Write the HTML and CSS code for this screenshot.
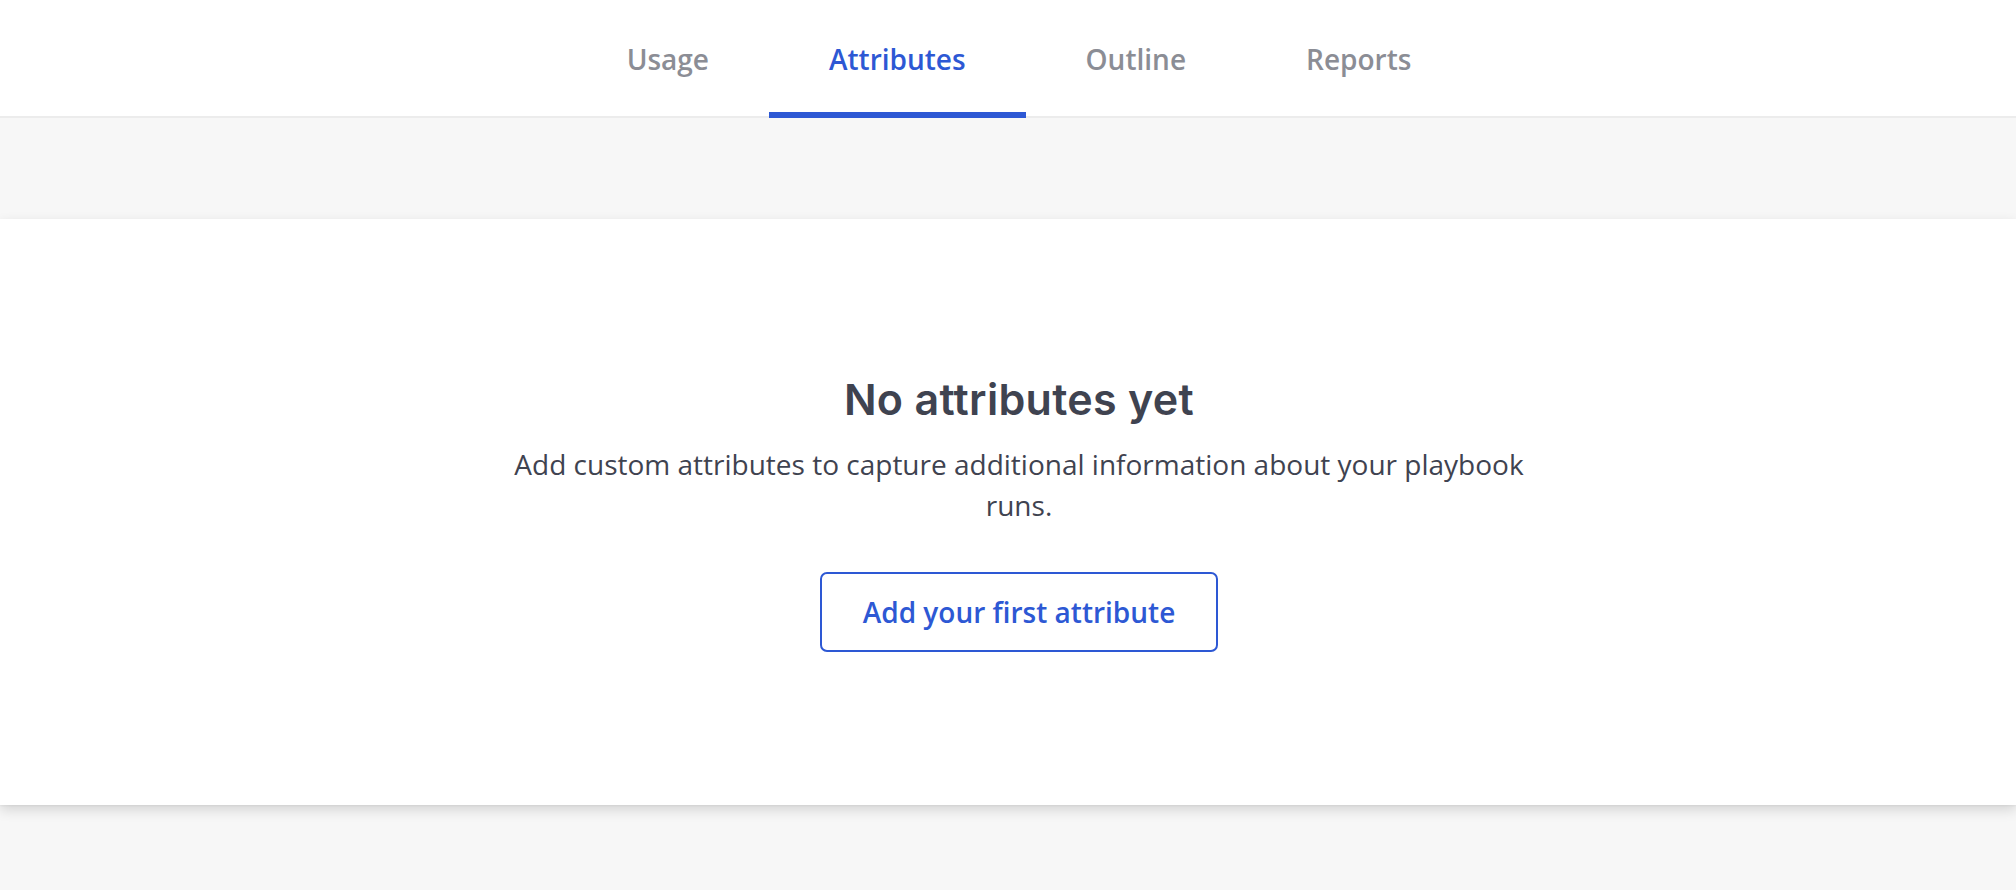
FILE: index.html
```html
<!DOCTYPE html>
<html lang="en">
<head>
<meta charset="utf-8">
<title>Attributes</title>
<link rel="stylesheet" href="styles.css">
</head>
<body>
  <header class="tabbar">
    <nav class="tabs">
      <a class="tab">Usage</a>
      <a class="tab tab-active">Attributes</a>
      <a class="tab">Outline</a>
      <a class="tab">Reports</a>
    </nav>
  </header>
  <main class="page">
    <section class="card">
      <div class="empty">
        <h2 class="empty-title">No attributes yet</h2>
        <p class="empty-text">Add custom attributes to capture additional information about your playbook runs.</p>
        <button class="btn-outline" type="button">Add your first attribute</button>
      </div>
    </section>
  </main>
</body>
</html>
```

FILE: styles.css
```css
html, body {
  margin: 0;
  padding: 0;
}
body {
  background: #f7f7f7;
  font-family: "Open Sans", "Liberation Sans", sans-serif;
  color: #3f4350;
  width: 2016px;
  height: 890px;
  overflow: hidden;
}
.tabbar {
  background: #ffffff;
  height: 118px;
  box-shadow: inset 0 -2px 0 #ececec;
  display: flex;
  justify-content: center;
  padding-left: 22px;
}
.tabs {
  display: flex;
  height: 100%;
}
.tab {
  display: flex;
  align-items: center;
  padding: 0 60px 1px 60px;
  font-size: 28px;
  font-weight: 600;
  color: #8b8d95;
  cursor: pointer;
}
.tab-active {
  color: #2d58d4;
  box-shadow: inset 0 -6px 0 #2d58d4;
}
.page {
  padding-top: 101px;
}
.card {
  background: #ffffff;
  height: 586px;
  box-shadow: 0 5px 12px rgba(0, 0, 0, 0.14), 0 1px 2px rgba(0, 0, 0, 0.05);
  display: flex;
  justify-content: center;
  padding-left: 22px;
  box-sizing: border-box;
}
.empty {
  display: flex;
  flex-direction: column;
  align-items: center;
  padding-top: 155px;
}
.empty-title {
  margin: 0;
  font-family: "Inter", "Lato", sans-serif;
  font-weight: 600;
  font-size: 43px;
  line-height: 50px;
  color: #3f4350;
  letter-spacing: 0.3px;
}
.empty-text {
  margin: 20px 0 0;
  max-width: 1040px;
  text-align: center;
  font-size: 28px;
  line-height: 41px;
  color: #3f4350;
}
.btn-outline {
  margin-top: 46px;
  height: 80px;
  padding: 0 41px;
  border: 2px solid #2d58d4;
  border-radius: 7px;
  background: #ffffff;
  color: #2d58d4;
  font-family: "Open Sans", "Liberation Sans", sans-serif;
  font-size: 28px;
  font-weight: 600;
  cursor: pointer;
}
```
